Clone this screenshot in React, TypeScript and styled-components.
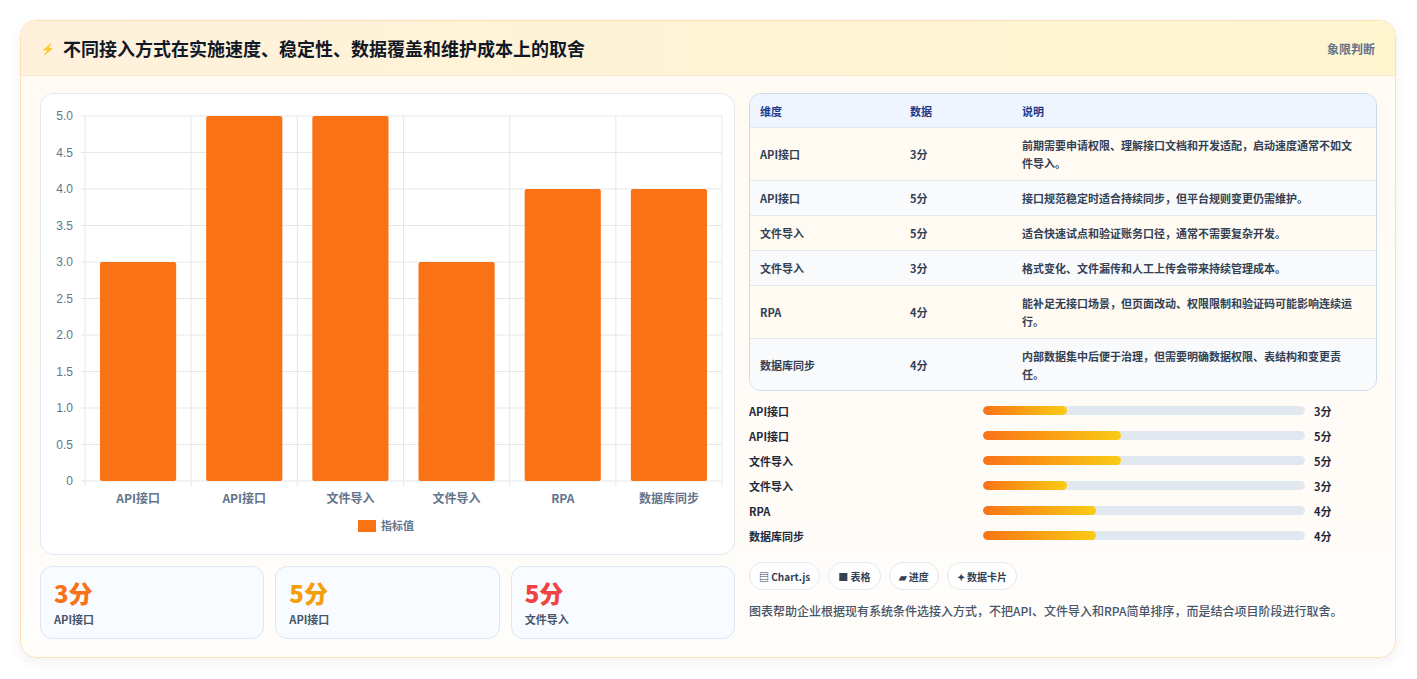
import React from "react";
import styled, { createGlobalStyle } from "styled-components";

const Global = createGlobalStyle`
  html,body{margin:0;padding:0;background:#f3f4f6;}
  body{font-family:"Noto Sans CJK SC","Noto Sans",sans-serif;}
  *{box-sizing:border-box;}
`;
const Page = styled.div`padding:20px 21px 21px 20px;background:#fff;min-height:679px;`;
const Card = styled.div`
  border:1px solid #fde2b8;border-radius:16px;overflow:hidden;
  background:linear-gradient(180deg,#fffaf2,#fffdfa);
  box-shadow:0 4px 14px rgba(0,0,0,0.06);
`;
const Header = styled.div`
  height:55px;display:flex;align-items:center;justify-content:space-between;
  padding:0 20px 0 20px;background:linear-gradient(90deg,#fff1dc,#fef6cf);
  border-bottom:1px solid #f5e6cc;
`;
const Title = styled.h1`margin:0;font-size:18px;font-weight:700;color:#111827;display:flex;align-items:center;gap:8px;`;
const Tag = styled.span`font-size:12px;color:#64748b;font-weight:600;`;
const Body = styled.div`display:grid;grid-template-columns:695px 628px;gap:14px;padding:17px 19px 18px 19px;`;
const Col = styled.div`display:flex;flex-direction:column;`;
const ChartBox = styled.div`height:462px;background:#fff;border:1px solid #e2e8f0;border-radius:14px;`;
const Cards = styled.div`display:grid;grid-template-columns:repeat(3,1fr);gap:11px;margin-top:11px;`;
const Stat = styled.div`height:73px;border:1px solid #dbe7f5;border-radius:12px;background:#f8fbff;padding:10px 13px;`;
const StatVal = styled.div<{c:string}>`font-size:24px;font-weight:800;color:${p=>p.c};line-height:32px;`;
const StatLab = styled.div`font-size:11px;font-weight:600;color:#475569;margin-top:2px;`;
const Table = styled.div`border:1px solid #cbd9ea;border-radius:12px;overflow:hidden;background:#fff;`;
const Row = styled.div<{bg:string;h:number}>`
  display:grid;grid-template-columns:150px 112px 1fr;min-height:${p=>p.h}px;align-items:center;
  background:${p=>p.bg};border-top:1px solid #e2e8f0;padding:0 10px;font-size:11px;color:#334155;font-weight:600;line-height:18px;
  &:first-child{border-top:none;}
`;
const Th = styled.div`color:#1e3a8a;font-weight:700;`;
const Desc = styled.div`padding-right:10px;`;
const Bars = styled.div`display:flex;flex-direction:column;gap:6px;margin-top:10px;`;
const BarRow = styled.div`display:grid;grid-template-columns:234px 322px 1fr;align-items:center;height:19px;font-size:11px;font-weight:700;color:#1f2937;`;
const Track = styled.div`height:9px;border-radius:5px;background:#e2e8f0;overflow:hidden;`;
const Fill = styled.div`height:100%;border-radius:5px;background:linear-gradient(90deg,#f97316,#facc15);`;
const Val = styled.div`padding-left:9px;`;
const Chips = styled.div`display:flex;gap:8px;margin-top:17px;`;
const Chip = styled.span`height:28px;padding:0 9px;border:1px solid #e2e8f0;border-radius:14px;background:#fff;display:flex;align-items:center;font-size:10px;font-weight:600;color:#334155;gap:3px;`;
const Note = styled.p`margin:10px 0 0;font-size:12px;line-height:21px;color:#475569;font-weight:500;`;

const cats=["API接口","API接口","文件导入","文件导入","RPA","数据库同步"];
const vals=[3,5,5,3,4,4];
const descs=["前期需要申请权限、理解接口文档和开发适配，启动速度通常不如文件导入。","接口规范稳定时适合持续同步，但平台规则变更仍需维护。","适合快速试点和验证账务口径，通常不需要复杂开发。","格式变化、文件漏传和人工上传会带来持续管理成本。","能补足无接口场景，但页面改动、权限限制和验证码可能影响连续运行。","内部数据集中后便于治理，但需要明确数据权限、表结构和变更责任。"];
const heights=[53,35,35,35,53,52];

function Chart(){
  const x0=44,x1=681,y0=22,y1=387;const cw=(x1-x0)/6;
  const ticks=[0,0.5,1,1.5,2,2.5,3,3.5,4,4.5,5];
  const Y=(v:number)=>y1-(v/5)*(y1-y0);
  return <svg width="695" height="460" style={{display:"block"}}>
    {ticks.map(t=><g key={t}><line x1={x0-4} x2={x1} y1={Y(t)} y2={Y(t)} stroke="#e5e7eb"/>
      <text x={x0-12} y={Y(t)+4} fontSize="12" fill="#64748b" textAnchor="end" fontFamily="Liberation Sans">{t===0?"0":t.toFixed(1)}</text></g>)}
    {Array.from({length:7}).map((_,i)=><line key={i} x1={x0+i*cw} x2={x0+i*cw} y1={y0} y2={y1+5} stroke="#e5e7eb"/>)}
    {vals.map((v,i)=><rect key={i} x={x0+i*cw+15} width={cw-30} y={Y(v)} height={y1-Y(v)} rx="2" fill="#f97316"/>)}
    {cats.map((c,i)=><text key={i} x={x0+i*cw+cw/2} y={409} fontSize="12" fontWeight="600" fill="#64748b" textAnchor="middle">{c}</text>)}
    <rect x="317" y="426" width="18" height="12" fill="#f97316"/>
    <text x="340" y="436" fontSize="11" fontWeight="600" fill="#64748b">指标值</text>
  </svg>;
}

export default function App(){
  return <><Global/><Page><Card>
    <Header><Title><span style={{fontSize:11,color:"#3b82f6"}}>⚡</span>不同接入方式在实施速度、稳定性、数据覆盖和维护成本上的取舍</Title><Tag>象限判断</Tag></Header>
    <Body>
      <Col>
        <ChartBox><Chart/></ChartBox>
        <Cards>
          <Stat><StatVal c="#f97316">3分</StatVal><StatLab>API接口</StatLab></Stat>
          <Stat><StatVal c="#f59e0b">5分</StatVal><StatLab>API接口</StatLab></Stat>
          <Stat><StatVal c="#ef4444">5分</StatVal><StatLab>文件导入</StatLab></Stat>
        </Cards>
      </Col>
      <Col>
        <Table>
          <Row bg="#eef5ff" h={33}><Th>维度</Th><Th>数据</Th><Th>说明</Th></Row>
          {cats.map((c,i)=><Row key={i} bg={i%2===0?"#fffaf2":"#f8fafc"} h={heights[i]}><div>{c}</div><div>{vals[i]}分</div><Desc>{descs[i]}</Desc></Row>)}
        </Table>
        <Bars>
          {cats.map((c,i)=><BarRow key={i}><div>{c}</div><Track><Fill style={{width:`${[26,43,43,26,35,35][i]}%`}}/></Track><Val>{vals[i]}分</Val></BarRow>)}
        </Bars>
        <Chips><Chip>▤ Chart.js</Chip><Chip>■ 表格</Chip><Chip>▰ 进度</Chip><Chip>✦ 数据卡片</Chip></Chips>
        <Note>图表帮助企业根据现有系统条件选接入方式，不把API、文件导入和RPA简单排序，而是结合项目阶段进行取舍。</Note>
      </Col>
    </Body>
  </Card></Page></>;
}
